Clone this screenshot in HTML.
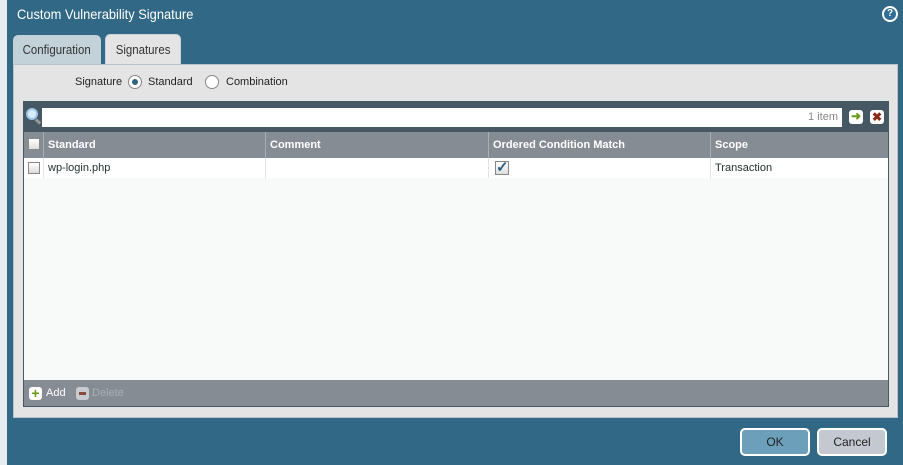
<!DOCTYPE html>
<html><head><style>
*{box-sizing:border-box;margin:0;padding:0}
body{width:903px;height:465px;overflow:hidden;background:#e9ecee;font-family:"Liberation Sans",sans-serif;font-size:12px;position:relative}
.dlg{position:absolute;left:7px;top:0;width:896px;height:465px;background:#306885}
.abs{position:absolute}
.title{left:10px;top:6px;color:#fff;font-size:14px;transform:scaleX(.92);transform-origin:left}
.tab{top:34px;height:31px;border-radius:5px 5px 0 0;color:#333;text-align:center;line-height:29px}
.tab span{display:inline-block;font-size:13px;transform:scaleX(.88)}
.panel{left:6px;top:64px;width:885px;height:354px;background:#e4e4e4;border:1px solid #b8c4ca}
.grid{left:16px;top:101px;width:866px;height:306px;background:#f8fafa;border:1px solid #465863}
.hdr{position:absolute;top:30px;left:0;width:864px;height:26px;background:#858c93;color:#fff;font-weight:bold;font-size:11px}
.hdr div,.row div{position:absolute;top:0;height:100%;padding-left:4px;line-height:26px;border-left:1px solid #a8aeb3}
.row{position:absolute;top:56px;left:0;width:864px;height:20px;background:#fff;color:#233;font-size:11px}
.row div{line-height:20px;border-left:1px solid #e1e4e6}
.cb{position:absolute;width:12px;height:12px;border:1px solid #888;background:linear-gradient(#fff,#ddd)}
.btn{top:428px;width:70px;height:28px;border:2px solid #fff;border-radius:5px;text-align:center;line-height:24px;font-size:12px;color:#222}
</style></head><body>
<div class="dlg">
<div class="abs title">Custom Vulnerability Signature</div>
<div class="abs" style="right:5px;top:6px;width:16px;height:16px;border-radius:50%;background:#fff;"><div style="position:absolute;left:2px;top:2px;width:12px;height:12px;border-radius:50%;background:#2f6f97;color:#fff;font-size:10px;font-weight:bold;text-align:center;line-height:12px">?</div></div>
<div class="abs tab" style="left:6px;width:88px;background:#c2d2d8;top:35px"><span>Configuration</span></div>
<div class="abs tab" style="left:98px;width:76px;background:#e4e4e4;border:1px solid #c9d3d8;border-bottom:none"><span>Signatures</span></div>
<div class="abs panel"></div>
<div class="abs" style="left:68px;top:76px;font-size:11px;color:#222">Signature</div>
<div class="abs" style="left:121px;top:75px;width:14px;height:14px;border-radius:50%;border:1px solid #888;background:#fff"><div style="position:absolute;left:3px;top:3px;width:6px;height:6px;border-radius:50%;background:#2f6585"></div></div>
<div class="abs" style="left:141px;top:76px;font-size:11px;color:#222">Standard</div>
<div class="abs" style="left:198px;top:75px;width:14px;height:14px;border-radius:50%;border:1px solid #888;background:#fff"></div>
<div class="abs" style="left:219px;top:76px;font-size:11px;color:#222">Combination</div>
<div class="abs grid">
 <div class="abs" style="left:0;top:0;width:864px;height:30px;background:#465863"></div>
 <div class="abs" style="left:2px;top:6px;width:12px;height:12px;border-radius:50%;border:2px solid #9cc7ea;background:#d8ecfa"></div>
 <div class="abs" style="left:11px;top:18px;width:6px;height:3px;background:#999;transform:rotate(45deg)"></div>
 <div class="abs" style="left:18px;top:6px;width:800px;height:19px;background:#fff;text-align:right;padding-right:4px;line-height:19px;color:#888;font-size:11px">1 item</div>
 <div class="abs" style="left:825px;top:8px;width:14px;height:14px;background:#fff;border-radius:3px;color:#6a9a1a;font-weight:bold;font-size:12px;line-height:13px;text-align:center">➜</div>
 <div class="abs" style="left:846px;top:8px;width:14px;height:14px;background:#fff;border-radius:3px;color:#8a2a1a;font-weight:bold;font-size:12px;line-height:14px;text-align:center">✖</div>
 <div class="hdr">
  <div style="left:0;width:19px;border:none"><span class="cb" style="left:4px;top:6px"></span></div>
  <div style="left:19px;width:222px">Standard</div>
  <div style="left:241px;width:223px">Comment</div>
  <div style="left:464px;width:222px">Ordered Condition Match</div>
  <div style="left:686px;width:178px">Scope</div>
 </div>
 <div class="row">
  <div style="left:0;width:19px;border:none"><span class="cb" style="left:4px;top:4px"></span></div>
  <div style="left:19px;width:222px">wp-login.php</div>
  <div style="left:241px;width:223px"></div>
  <div style="left:464px;width:222px"><span class="cb" style="left:6px;top:3px;width:14px;height:14px;color:#2d5f82;font-size:15px;line-height:11px;font-weight:bold">✓</span></div>
  <div style="left:686px;width:178px">Transaction</div>
 </div>
 <div class="abs" style="left:0;top:278px;width:864px;height:26px;background:#858c93"></div>
 <div class="abs" style="left:5px;top:285px;width:13px;height:13px;border-radius:3px;background:#fff;color:#6a9a1a;font-weight:bold;font-size:14px;line-height:12px;text-align:center">+</div>
 <div class="abs" style="left:22px;top:285px;color:#fff;font-size:11px">Add</div>
 <div class="abs" style="left:52px;top:285px;width:13px;height:13px;border-radius:3px;background:#c8ccd0"><div style="position:absolute;left:3px;top:5px;width:7px;height:3px;background:#8a4a3a"></div></div>
 <div class="abs" style="left:68px;top:285px;color:#a9aeb2;font-size:11px">Delete</div>
</div>
<div class="abs btn" style="left:733px;background:#6b9fba">OK</div>
<div class="abs btn" style="left:810px;background:#c4c8d0">Cancel</div>
</div>
</body></html>
